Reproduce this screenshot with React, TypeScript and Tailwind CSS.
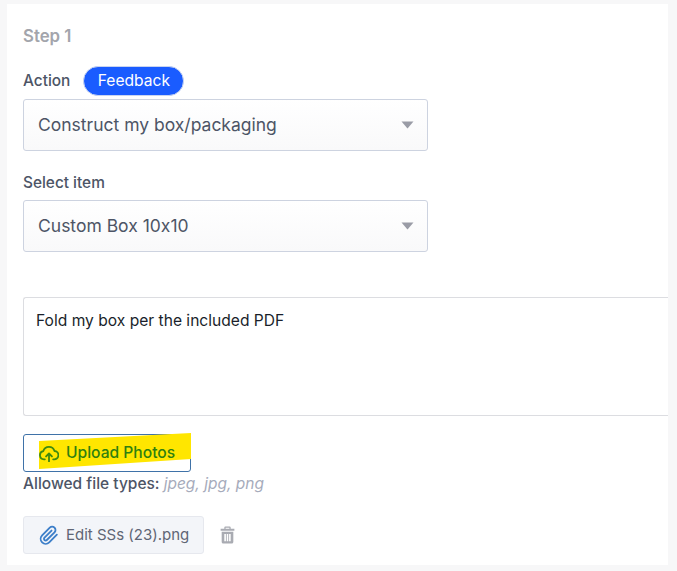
const font = "font-['Inter','Noto_Sans',sans-serif] [font-feature-settings:'calt'_0,'liga'_0]";

function Caret() {
  return (
    <svg width="13" height="8" viewBox="0 0 13 8" className="absolute right-[13px] top-1/2 -translate-y-1/2">
      <path d="M0.5 0.5 H12.5 L6.5 7.5 Z" fill="#9a9ca6" />
    </svg>
  );
}

function Select({ value }: { value: string }) {
  return (
    <div className="relative flex h-[52px] w-[405px] items-center rounded-[3px] border border-[#cdd3e0] bg-gradient-to-b from-white to-[#f9f9fa] pl-[14px] text-[17.5px] text-[#4d5566]">
      {value}
      <Caret />
    </div>
  );
}

export default function App() {
  return (
    <div className={`h-[571px] w-[677px] overflow-hidden bg-[#f7f7f8] pl-[7px] pt-[4px] ${font}`}>
      <div className="h-[561px] w-[661px] bg-white pl-[16px]">
        <div className="pt-[22px] text-[16.8px] leading-[20px] font-semibold text-[#a3a5ac]">Step 1</div>
        <div className="mt-[20px] flex h-[30px] items-center">
          <span className="text-[15.4px] font-medium text-[#4d5566]">Action</span>
          <span className="ml-[13px] flex h-[30px] w-[101px] items-center justify-center rounded-full border border-[#c9d4f0] bg-[#1a5cff] text-[15.6px] font-normal text-white">Feedback</span>
        </div>
        <div className="mt-[3px]">
          <Select value="Construct my box/packaging" />
        </div>
        <div className="mt-[22px] text-[15.4px] leading-[20px] font-medium text-[#4d5566]">Select item</div>
        <div className="mt-[7px]">
          <Select value="Custom Box 10x10" />
        </div>
        <div className="mt-[45px] h-[119px] w-[645px] rounded-l-[3px] border border-r-0 border-[#dcdde1] pl-[12px] pt-[11px] text-[15.6px] leading-[24px] text-[#1a1f2b]">
          Fold my box per the included PDF
        </div>
        <div className="relative mt-[18px] flex h-[38px] w-[168px] items-center rounded-[3px] border border-[#3f72a8] bg-white pl-[15px]">
          <div className="absolute left-[15px] top-[-2px] h-[36px] w-[152px] bg-[#ffe600] [clip-path:polygon(0_22%,100%_0,100%_72%,0_100%)]" />
          <svg width="20" height="17" viewBox="0 0 24 20" fill="none" stroke="#3f8a10" strokeWidth="2.2" strokeLinecap="round" strokeLinejoin="round" className="relative">
            <path d="M7 17H6a5 5 0 0 1-.8-9.9A7 7 0 0 1 18.6 7 4.9 4.9 0 0 1 18 17h-1" />
            <path d="M12 19.5v-9M8.5 13.5l3.5-3.5 3.5 3.5" />
          </svg>
          <span className="relative ml-[7px] text-[15.6px] font-medium text-[#2f8010]">Upload Photos</span>
        </div>
        <div className="mt-[2px] text-[15.5px] leading-[20px]">
          <span className="font-medium text-[#4d5566]">Allowed file types: </span>
          <span className="italic text-[#a6abbb]">jpeg, jpg, png</span>
        </div>
        <div className="mt-[22px] flex items-center">
          <div className="flex h-[38px] w-[181px] items-center rounded-[3px] border border-[#e6e8ee] bg-[#f3f5f9] pl-[15px]">
            <svg width="20" height="21" viewBox="0 0 24 24" fill="none" stroke="#3d7fc9" strokeWidth="2.2" strokeLinecap="round" strokeLinejoin="round">
              <path d="M21.44 11.05l-9.19 9.19a6 6 0 0 1-8.49-8.49l9.19-9.19a4 4 0 0 1 5.66 5.66l-9.2 9.19a2 2 0 0 1-2.83-2.83l8.49-8.48" />
            </svg>
            <span className="ml-[7px] text-[15px] text-[#5f6675]">Edit SSs (23).png</span>
          </div>
          <svg width="15" height="18" viewBox="0 0 14 17" className="ml-[16px]" fill="#a9abb2">
            <path d="M4 2.5 V1.5 A1 1 0 0 1 5 0.5 H9 A1 1 0 0 1 10 1.5 V2.5 H13.5 V4.5 H0.5 V2.5 Z M5.2 2.5 H8.8 V1.6 H5.2 Z" fillRule="evenodd" />
            <path fillRule="evenodd" d="M1.5 5.5 H12.5 V15 A1.5 1.5 0 0 1 11 16.5 H3 A1.5 1.5 0 0 1 1.5 15 Z M4 7.5 V14.5 H5.5 V7.5 Z M6.3 7.5 V14.5 H7.7 V7.5 Z M8.5 7.5 V14.5 H10 V7.5 Z" />
          </svg>
        </div>
      </div>
    </div>
  );
}
